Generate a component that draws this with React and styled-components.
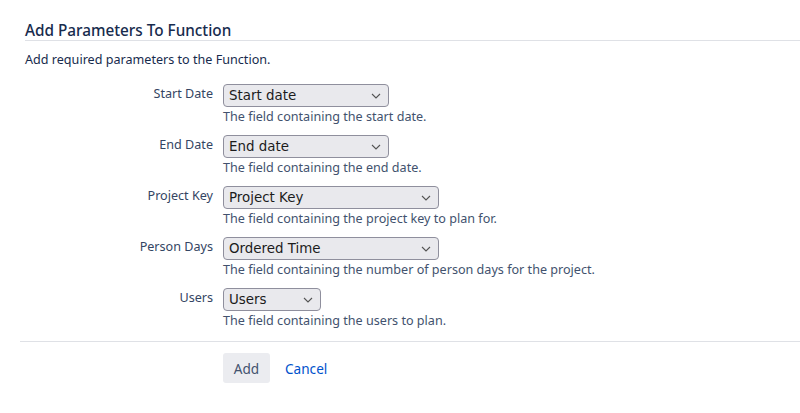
import React from 'react'
import styled, { createGlobalStyle } from 'styled-components'

const GlobalStyle = createGlobalStyle`
  body {
    margin: 0;
    background: #fff;
    font-family: "Noto Sans", "Open Sans", sans-serif;
    color: #172b4d;
  }
`

const chevron = `url("data:image/svg+xml,%3Csvg xmlns='http://www.w3.org/2000/svg' width='10' height='6' viewBox='0 0 10 6'%3E%3Cpath d='M1 1l4 4 4-4' fill='none' stroke='%23555' stroke-width='1.1'/%3E%3C/svg%3E")`

const Page = styled.div`
  padding: 0 0 0 20px;
  width: 780px;
`

const Header = styled.h2`
  margin: 0 0 0 5px;
  padding: 20px 0 0;
  font-size: 15.3px;
  font-weight: 500;
  color: #172b4d;
  border-bottom: 1px solid #dfe1e6;
  line-height: 20px;
`

const Intro = styled.p`
  margin: 0 0 0 5px;
  padding: 10px 0 15px;
  font-size: 12.6px;
  line-height: 18px;
  color: #172b4d;
`

const Fields = styled.div`
  display: grid;
  grid-template-columns: 193px 1fr;
  column-gap: 10px;
  row-gap: 9px;
`

const Label = styled.label`
  text-align: right;
  font-size: 12.6px;
  line-height: 18px;
  padding-top: 1px;
  color: #344563;
`

const Field = styled.div`
  display: flex;
  flex-direction: column;
  align-items: flex-start;
`

const Select = styled.select`
  appearance: none;
  box-sizing: border-box;
  width: ${p => p.$width}px;
  height: 23px;
  font-family: "DejaVu Sans", sans-serif;
  font-size: 13.4px;
  padding: 0 20px 0 5px;
  color: #1c1c1c;
  background: #e9e9ed ${chevron} no-repeat right 7px center;
  border: 1px solid #8f8f9d;
  border-radius: 4px;
`

const Help = styled.div`
  font-size: 12.6px;
  line-height: 18px;
  margin-top: 1px;
  color: #42526e;
`

const Footer = styled.div`
  margin-top: 11px;
  border-top: 1px solid #dfe1e6;
  padding: 11px 0 0 203px;
  display: flex;
  align-items: center;
  gap: 15px;
`

const Button = styled.button`
  height: 30px;
  width: 47px;
  padding: 0;
  border: none;
  border-radius: 3px;
  background: #ebecf0;
  color: #42526e;
  font-family: inherit;
  font-size: 13.6px;
`

const LinkButton = styled.a`
  color: #0052cc;
  font-size: 13.6px;
  text-decoration: none;
`

const fields = [
  { label: 'Start Date', value: 'Start date', width: 166, help: 'The field containing the start date.' },
  { label: 'End Date', value: 'End date', width: 166, help: 'The field containing the end date.' },
  { label: 'Project Key', value: 'Project Key', width: 216, help: 'The field containing the project key to plan for.' },
  { label: 'Person Days', value: 'Ordered Time', width: 216, help: 'The field containing the number of person days for the project.' },
  { label: 'Users', value: 'Users', width: 98, help: 'The field containing the users to plan.' },
]

export default function App() {
  return (
    <Page>
      <GlobalStyle />
      <Header>Add Parameters To Function</Header>
      <Intro>Add required parameters to the Function.</Intro>
      <Fields>
        {fields.map(f => (
          <React.Fragment key={f.label}>
            <Label>{f.label}</Label>
            <Field>
              <Select $width={f.width} defaultValue={f.value}>
                <option>{f.value}</option>
              </Select>
              <Help>{f.help}</Help>
            </Field>
          </React.Fragment>
        ))}
      </Fields>
      <Footer>
        <Button>Add</Button>
        <LinkButton href="#">Cancel</LinkButton>
      </Footer>
    </Page>
  )
}
